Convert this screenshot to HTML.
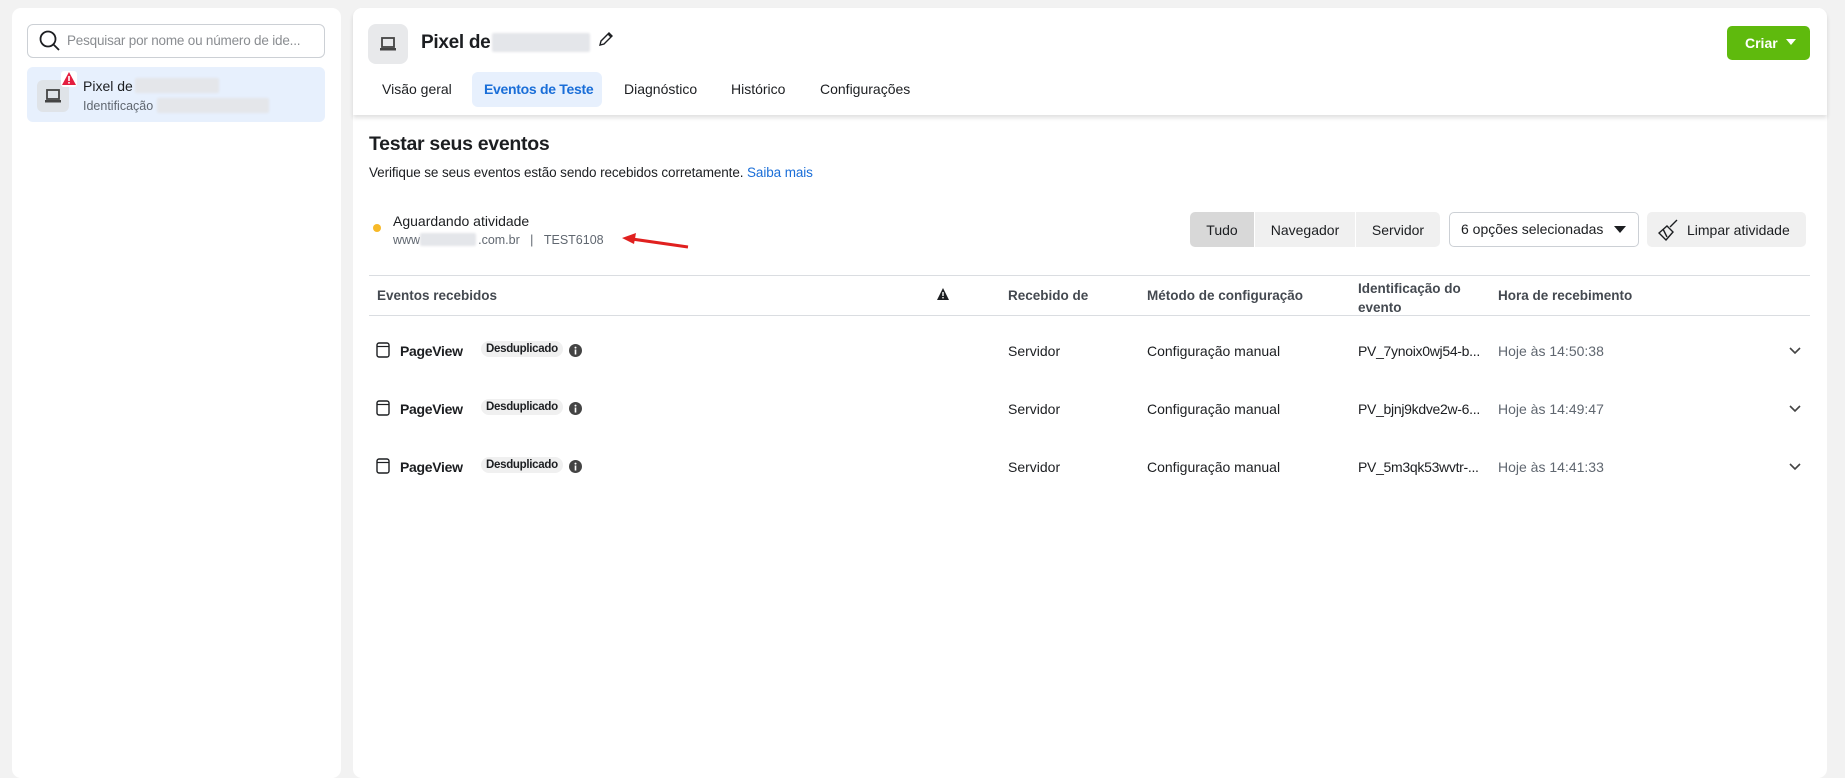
<!DOCTYPE html>
<html><head><meta charset="utf-8"><style>
*{box-sizing:border-box;margin:0;padding:0}
body{width:1845px;height:761px;background:#f2f2f2;font-family:"Liberation Sans",Arial,sans-serif;color:#1c1e21;position:relative;overflow:hidden;font-size:14px}
.a{position:absolute;white-space:nowrap}
.panel{position:absolute;background:#fff;border-radius:9px}
.blur{position:absolute;background:#e4e6ea;border-radius:2px;filter:blur(1px)}
.seg{position:absolute;top:212px;height:35px;background:#f0f0f0;font-size:14px;display:flex;align-items:center;justify-content:center}
.th{font-weight:bold;font-size:13.5px;color:#444950}
.r{position:absolute;left:0;font-size:14px}
</style></head><body>
<div class="panel" style="left:12px;top:8px;width:329px;height:770px"></div>
<div class="a" style="left:27px;top:24px;width:298px;height:34px;border:1px solid #ccd0d5;border-radius:6px"></div>
<svg class="a" style="left:38px;top:29px" width="24" height="24" viewBox="0 0 24 24"><circle cx="10" cy="10" r="7.5" fill="none" stroke="#1c1e21" stroke-width="1.8"/><line x1="15.5" y1="15.5" x2="21" y2="21" stroke="#1c1e21" stroke-width="1.8"/></svg>
<div class="a" style="left:67px;top:33px;font-size:13.5px;color:#8a8d91;letter-spacing:-0.2px">Pesquisar por nome ou número de ide...</div>
<div class="a" style="left:27px;top:67px;width:298px;height:55px;background:#e7f0fd;border-radius:6px"></div>
<div class="a" style="left:37px;top:80px;width:32px;height:32px;background:#dfe3e8;border-radius:6px"></div>
<svg class="a" style="left:44px;top:87px" width="18" height="18" viewBox="0 0 18 18"><rect x="3" y="3" width="12" height="9" fill="none" stroke="#444" stroke-width="1.8"/><rect x="1" y="13" width="16" height="2.5" fill="#444"/></svg>
<div class="a" style="left:61px;top:71px;width:16px;height:16px;background:#fff;border-radius:3px"></div>
<svg class="a" style="left:62px;top:72px" width="14" height="13" viewBox="0 0 14 13"><path d="M7 0L14 13H0Z" fill="#e41e3f"/><rect x="6.2" y="4" width="1.6" height="5" fill="#fff"/><rect x="6.2" y="10" width="1.6" height="1.6" fill="#fff"/></svg>
<div class="a" style="left:83px;top:78px;font-size:14px">Pixel de</div>
<div class="blur" style="left:135px;top:78px;width:84px;height:15px"></div>
<div class="a" style="left:83px;top:99px;font-size:12.5px;color:#606770">Identificação</div>
<div class="blur" style="left:157px;top:98px;width:112px;height:15px"></div>

<div class="panel" style="left:353px;top:8px;width:1474px;height:770px"></div>
<div class="a" style="left:353px;top:8px;width:1474px;height:107px;background:#fff;border-radius:9px 9px 0 0;box-shadow:0 3px 4px rgba(0,0,0,.12)"></div>
<div class="a" style="left:368px;top:24px;width:40px;height:40px;background:#e8e9eb;border-radius:8px"></div>
<svg class="a" style="left:379px;top:35px" width="18" height="18" viewBox="0 0 18 18"><rect x="3" y="3" width="12" height="9" fill="none" stroke="#444" stroke-width="1.8"/><rect x="1" y="13" width="16" height="2.5" fill="#444"/></svg>
<div class="a" style="left:421px;top:32px;font-size:19px;font-weight:bold;letter-spacing:-0.3px">Pixel de</div>
<div class="blur" style="left:492px;top:33px;width:98px;height:19px"></div>
<svg class="a" style="left:598px;top:31px" width="16" height="16" viewBox="0 0 16 16"><path d="M2 14L3 10L11 2L14 5L6 13Z M10 3L13 6" fill="none" stroke="#1c1e21" stroke-width="1.4"/></svg>
<div class="a" style="left:1727px;top:26px;width:83px;height:34px;background:#5fba0d;border-radius:5px"></div>
<div class="a" style="left:1745px;top:35px;font-size:14px;font-weight:bold;color:#fff">Criar</div>
<svg class="a" style="left:1786px;top:39px" width="10" height="7"><path d="M0 0H10L5 6Z" fill="#fff"/></svg>
<div class="a" style="left:382px;top:81px;font-size:14px">Visão geral</div>
<div class="a" style="left:472px;top:72px;width:130px;height:35px;background:#e7f0fd;border-radius:6px"></div>
<div class="a" style="left:484px;top:81px;font-size:14px;font-weight:bold;color:#1a6ed8;letter-spacing:-0.3px">Eventos de Teste</div>
<div class="a" style="left:624px;top:81px;font-size:14px">Diagnóstico</div>
<div class="a" style="left:731px;top:81px;font-size:14px">Histórico</div>
<div class="a" style="left:820px;top:81px;font-size:14px">Configurações</div>

<div class="a" style="left:369px;top:133px;font-size:19.5px;font-weight:bold;letter-spacing:-0.3px">Testar seus eventos</div>
<div class="a" style="left:369px;top:165px;font-size:13.5px;letter-spacing:-0.1px">Verifique se seus eventos estão sendo recebidos corretamente. <span style="color:#1a6ed8">Saiba mais</span></div>
<div class="a" style="left:373px;top:224px;width:8px;height:8px;border-radius:50%;background:#f7b928"></div>
<div class="a" style="left:393px;top:213px;font-size:14px">Aguardando atividade</div>
<div class="a" style="left:393px;top:233px;font-size:12.5px;color:#606770">www<span style="display:inline-block;width:58px"></span>.com.br &nbsp;&nbsp;| &nbsp;&nbsp;TEST6108</div>
<div class="blur" style="left:420px;top:233px;width:56px;height:13px"></div>
<svg class="a" style="left:618px;top:232px" width="75" height="20"><path d="M70 15L14 7" stroke="#e0201f" stroke-width="3"/><path d="M4 6L18 1L16 12Z" fill="#e0201f"/></svg>

<div class="seg" style="left:1190px;width:64px;background:#d8d8d8;border-radius:5px 0 0 5px">Tudo</div>
<div class="seg" style="left:1255px;width:100px">Navegador</div>
<div class="seg" style="left:1356px;width:84px;border-radius:0 5px 5px 0">Servidor</div>
<div class="a" style="left:1449px;top:212px;width:190px;height:35px;border:1px solid #ccd0d5;border-radius:5px"></div>
<div class="a" style="left:1461px;top:221px;font-size:14px">6 opções selecionadas</div>
<svg class="a" style="left:1614px;top:226px" width="12" height="8"><path d="M0 0H12L6 7Z" fill="#1c1e21"/></svg>
<div class="seg" style="left:1647px;width:159px;border-radius:5px;justify-content:flex-start;padding-left:40px">Limpar atividade</div>
<svg class="a" style="left:1658px;top:219px" width="20" height="22" viewBox="0 0 20 22"><path d="M19 1L12 8 M9 7L15 13L8 21L1 14Z M5 10L9 18" fill="none" stroke="#1c1e21" stroke-width="1.4"/></svg>

<div class="a" style="left:369px;top:275px;width:1441px;height:1px;background:#dadde1"></div>
<div class="a" style="left:369px;top:315px;width:1441px;height:1px;background:#dadde1"></div>
<div class="a th" style="left:377px;top:288px">Eventos recebidos</div>
<svg class="a" style="left:937px;top:288px" width="12" height="12"><path d="M6 0L12 12H0Z" fill="#1c1e21"/><rect x="5.3" y="4" width="1.4" height="4" fill="#fff"/><rect x="5.3" y="9" width="1.4" height="1.4" fill="#fff"/></svg>
<div class="a th" style="left:1008px;top:288px">Recebido de</div>
<div class="a th" style="left:1147px;top:288px">Método de configuração</div>
<div class="a th" style="left:1358px;top:279px;line-height:19px">Identificação do<br>evento</div>
<div class="a th" style="left:1498px;top:288px">Hora de recebimento</div>

<div class="r" style="top:342px">
 <svg class="a" style="left:376px;top:0" width="14" height="16"><rect x="1" y="1" width="12" height="14" rx="2" fill="none" stroke="#1c1e21" stroke-width="1.4"/><line x1="1" y1="4.5" x2="13" y2="4.5" stroke="#1c1e21" stroke-width="1.2"/></svg>
 <div class="a" style="left:400px;top:1px;font-weight:bold;font-size:14px;letter-spacing:-0.3px">PageView</div>
 <div class="a" style="left:481px;top:-1px;padding:2px 5px;background:#f0f0f0;border-radius:9px;font-size:11.5px;font-weight:bold;letter-spacing:-0.3px">Desduplicado</div>
 <svg class="a" style="left:569px;top:2px" width="13" height="13"><circle cx="6.5" cy="6.5" r="6.5" fill="#444"/><rect x="5.7" y="5.5" width="1.6" height="5" fill="#fff"/><circle cx="6.5" cy="3.6" r="1" fill="#fff"/></svg>
 <div class="a" style="left:1008px;top:1px">Servidor</div>
 <div class="a" style="left:1147px;top:1px">Configuração manual</div>
 <div class="a" style="left:1358px;top:1px;letter-spacing:-0.3px">PV_7ynoix0wj54-b...</div>
 <div class="a" style="left:1498px;top:1px;color:#606770">Hoje às 14:50:38</div>
 <svg class="a" style="left:1789px;top:5px" width="12" height="8"><path d="M1 1L6 6L11 1" fill="none" stroke="#444" stroke-width="1.6"/></svg>
</div>
<div class="r" style="top:400px">
 <svg class="a" style="left:376px;top:0" width="14" height="16"><rect x="1" y="1" width="12" height="14" rx="2" fill="none" stroke="#1c1e21" stroke-width="1.4"/><line x1="1" y1="4.5" x2="13" y2="4.5" stroke="#1c1e21" stroke-width="1.2"/></svg>
 <div class="a" style="left:400px;top:1px;font-weight:bold;font-size:14px;letter-spacing:-0.3px">PageView</div>
 <div class="a" style="left:481px;top:-1px;padding:2px 5px;background:#f0f0f0;border-radius:9px;font-size:11.5px;font-weight:bold;letter-spacing:-0.3px">Desduplicado</div>
 <svg class="a" style="left:569px;top:2px" width="13" height="13"><circle cx="6.5" cy="6.5" r="6.5" fill="#444"/><rect x="5.7" y="5.5" width="1.6" height="5" fill="#fff"/><circle cx="6.5" cy="3.6" r="1" fill="#fff"/></svg>
 <div class="a" style="left:1008px;top:1px">Servidor</div>
 <div class="a" style="left:1147px;top:1px">Configuração manual</div>
 <div class="a" style="left:1358px;top:1px;letter-spacing:-0.3px">PV_bjnj9kdve2w-6...</div>
 <div class="a" style="left:1498px;top:1px;color:#606770">Hoje às 14:49:47</div>
 <svg class="a" style="left:1789px;top:5px" width="12" height="8"><path d="M1 1L6 6L11 1" fill="none" stroke="#444" stroke-width="1.6"/></svg>
</div>
<div class="r" style="top:458px">
 <svg class="a" style="left:376px;top:0" width="14" height="16"><rect x="1" y="1" width="12" height="14" rx="2" fill="none" stroke="#1c1e21" stroke-width="1.4"/><line x1="1" y1="4.5" x2="13" y2="4.5" stroke="#1c1e21" stroke-width="1.2"/></svg>
 <div class="a" style="left:400px;top:1px;font-weight:bold;font-size:14px;letter-spacing:-0.3px">PageView</div>
 <div class="a" style="left:481px;top:-1px;padding:2px 5px;background:#f0f0f0;border-radius:9px;font-size:11.5px;font-weight:bold;letter-spacing:-0.3px">Desduplicado</div>
 <svg class="a" style="left:569px;top:2px" width="13" height="13"><circle cx="6.5" cy="6.5" r="6.5" fill="#444"/><rect x="5.7" y="5.5" width="1.6" height="5" fill="#fff"/><circle cx="6.5" cy="3.6" r="1" fill="#fff"/></svg>
 <div class="a" style="left:1008px;top:1px">Servidor</div>
 <div class="a" style="left:1147px;top:1px">Configuração manual</div>
 <div class="a" style="left:1358px;top:1px;letter-spacing:-0.3px">PV_5m3qk53wvtr-...</div>
 <div class="a" style="left:1498px;top:1px;color:#606770">Hoje às 14:41:33</div>
 <svg class="a" style="left:1789px;top:5px" width="12" height="8"><path d="M1 1L6 6L11 1" fill="none" stroke="#444" stroke-width="1.6"/></svg>
</div>
</body></html>
